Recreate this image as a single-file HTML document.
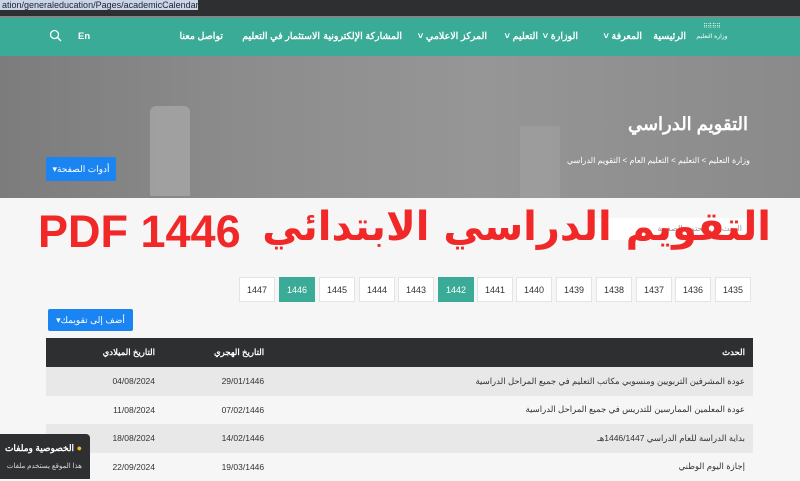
<!DOCTYPE html>
<html><head><meta charset="utf-8"><style>
*{margin:0;padding:0;box-sizing:border-box}
body{width:800px;height:479px;overflow:hidden;background:#f6f6f6;font-family:"Liberation Sans","Noto Sans CJK SC",sans-serif;position:relative}
.abs{position:absolute}
.top{left:0;top:0;width:800px;height:16px;background:#2e2f31}
.url{left:0;top:0;height:10px;background:#c9d6e8;color:#223;font-size:9px;line-height:10px;padding:0 2px;width:198px;white-space:nowrap;overflow:hidden}
.nav{left:0;top:16px;width:800px;height:40px;background:#3aab97;border-top:2px solid #7a8a88}
.nav .it{position:absolute;top:13px;color:#fff;font-size:9.5px;font-weight:bold;white-space:nowrap;direction:rtl}
.hero{left:0;top:56px;width:800px;height:142px;background:linear-gradient(90deg,#7c7c7c 0%,#8c8c8c 30%,#969696 60%,#8a8a8a 100%)}
.btn{background:#1a84f2;color:#fff;font-size:9px;border-radius:2px;text-align:center;direction:rtl}
.title{top:204px;left:30px;width:740px;height:70px;color:#f02828;font-weight:bold;white-space:nowrap}
.yr{position:absolute;top:277px;width:36px;height:25px;background:#fff;border:1px solid #e4e4e4;font-size:9px;color:#333;text-align:center;line-height:24px}
.yr.g{background:#3aab97;color:#fff;border-color:#3aab97}
table{position:absolute;left:46px;top:338px;width:707px;border-collapse:collapse;font-size:8.5px;color:#333}
th{background:#2e2f31;color:#fff;height:29px;font-weight:bold;white-space:nowrap}
td{height:28.5px;white-space:nowrap}
tr.s td{background:#e8e8e8}
.r{text-align:right;padding-right:8px;direction:rtl}
.c1{text-align:right;padding-right:59px;width:168px}
.c2{text-align:right;padding-right:83px;width:130px}
</style></head><body>
<div class="abs top"></div>
<div class="abs url">ation/generaleducation/Pages/academicCalendar.aspx</div>
<div class="abs nav">
 <div style="position:absolute;left:690px;top:4px;width:44px;height:26px;color:#fff;font-size:6px;text-align:center;line-height:10px">⠿⠿⠿⠿<br>وزارة التعليم</div>
 <span class="it" style="right:114px">الرئيسية</span>
 <span class="it" style="right:158px">المعرفة ˅</span>
 <span class="it" style="right:222px">الوزارة ˅</span>
 <span class="it" style="right:262px">التعليم ˅</span>
 <span class="it" style="right:313px">المركز الاعلامي ˅</span>
 <span class="it" style="right:398px">المشاركة الإلكترونية</span>
 <span class="it" style="right:480px">الاستثمار في التعليم</span>
 <span class="it" style="right:577px">تواصل معنا</span>
 <span class="it" style="left:78px">En</span>
 <svg style="position:absolute;left:49px;top:11px" width="13" height="13" viewBox="0 0 13 13"><circle cx="5.5" cy="5.5" r="4" fill="none" stroke="#fff" stroke-width="1.3"/><line x1="8.5" y1="8.5" x2="12" y2="12" stroke="#fff" stroke-width="1.3"/></svg>
</div>
<div class="abs hero">
 <div style="position:absolute;left:150px;top:50px;width:40px;height:90px;background:#b0b0b0;opacity:.6;border-radius:6px 6px 0 0"></div>
 <div style="position:absolute;left:520px;top:70px;width:40px;height:72px;background:#a4a4a4;opacity:.5"></div>
 <div style="position:absolute;right:52px;top:58px;color:#fff;font-size:18px;font-weight:bold;direction:rtl">التقويم الدراسي</div>
 <div style="position:absolute;right:50px;top:100px;color:#fff;font-size:8px;direction:rtl">وزارة التعليم &gt; التعليم &gt; التعليم العام &gt; التقويم الدراسي</div>
</div>
<div class="abs btn" style="left:46px;top:157px;width:70px;height:24px;line-height:24px">أدوات الصفحة▾</div>
<div class="abs" style="left:590px;top:218px;width:160px;height:22px;background:#fff;color:#999;font-size:8px;direction:rtl;padding:6px 8px">البحث في محتوى الصفحة</div>
<div class="abs title"><span style="position:absolute;left:8px;top:2px;font-size:45px">PDF 1446</span><span style="position:absolute;right:-1px;top:0;direction:rtl;font-family:'DejaVu Sans',sans-serif;font-size:40px">التقويم الدراسي الابتدائي</span></div>
<div class="yr" style="left:239px">1447</div><div class="yr g" style="left:279px">1446</div><div class="yr" style="left:319px">1445</div><div class="yr" style="left:359px">1444</div><div class="yr" style="left:398px">1443</div><div class="yr g" style="left:438px">1442</div><div class="yr" style="left:477px">1441</div><div class="yr" style="left:516px">1440</div><div class="yr" style="left:556px">1439</div><div class="yr" style="left:596px">1438</div><div class="yr" style="left:636px">1437</div><div class="yr" style="left:675px">1436</div><div class="yr" style="left:715px">1435</div>
<div class="abs btn" style="left:48px;top:309px;width:85px;height:22px;line-height:22px">أضف إلى تقويمك▾</div>
<table>
<tr><th class="c1">التاريخ الميلادي</th><th class="c2">التاريخ الهجري</th><th class="r">الحدث</th></tr>
<tr class="s"><td class="c1">04/08/2024</td><td class="c2">29/01/1446</td><td class="r">عودة المشرفين التربويين ومنسوبي مكاتب التعليم في جميع المراحل الدراسية</td></tr>
<tr><td class="c1">11/08/2024</td><td class="c2">07/02/1446</td><td class="r">عودة المعلمين الممارسين للتدريس في جميع المراحل الدراسية</td></tr>
<tr class="s"><td class="c1">18/08/2024</td><td class="c2">14/02/1446</td><td class="r">بداية الدراسة للعام الدراسي 1446/1447هـ</td></tr>
<tr><td class="c1">22/09/2024</td><td class="c2">19/03/1446</td><td class="r">إجازة اليوم الوطني</td></tr>
</table>
<div class="abs" style="left:0;top:434px;width:90px;height:45px;background:#2e2f31;border-radius:0 4px 0 0;color:#fff;direction:rtl;overflow:hidden">
 <div style="font-size:9px;font-weight:bold;padding:9px 8px 0 0;white-space:nowrap"><span style="color:#f5b921">●</span> الخصوصية وملفات</div>
 <div style="font-size:7px;padding:8px 8px 0 0;white-space:nowrap;color:#ddd">هذا الموقع يستخدم ملفات</div>
</div>
</body></html>
